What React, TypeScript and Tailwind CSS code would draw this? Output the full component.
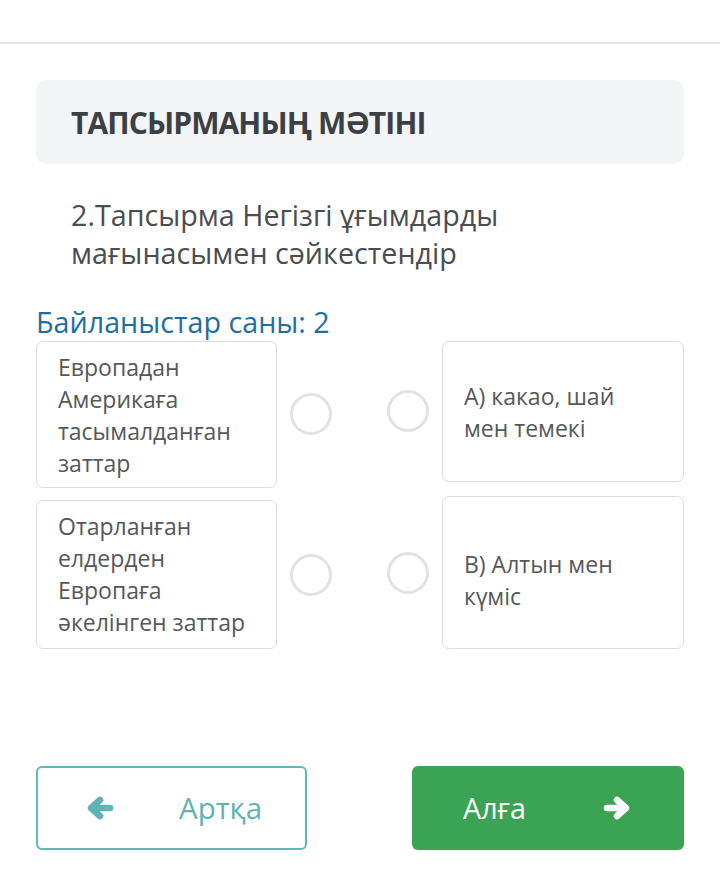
const pairs = [
  {
    left: "Европадан Америкаға тасымалданған заттар",
    right: "А) какао, шай мен темекі",
    pad: "pb-[8px]",
  },
  {
    left: "Отарланған елдерден Европаға әкелінген заттар",
    right: "В) Алтын мен күміс",
    pad: "pb-[10px]",
  },
];

function Circle({ className = "" }: { className?: string }) {
  return (
    <div
      className={`h-[42px] w-[42px] rounded-full border-[3px] border-[#dfe3e7] bg-white ${className}`}
    />
  );
}

// thick, round-capped arrow like the old font-awesome glyph
function Arrow({ flip = false, className = "" }: { flip?: boolean; className?: string }) {
  return (
    <svg
      viewBox="0 0 28 24"
      className={`h-[24px] w-[28px] ${flip ? "-scale-x-100" : ""} ${className}`}
      fill="none"
      stroke="currentColor"
      strokeWidth={6.5}
      strokeLinecap="round"
      strokeLinejoin="round"
    >
      <path d="M6 12H24" />
      <path d="M14 4L5 12L14 20" />
    </svg>
  );
}

export default function App() {
  return (
    <div
      className="min-h-[869px] bg-white text-[#4a4d50]"
      style={{ fontFamily: '"Open Sans", "Noto Sans", sans-serif' }}
    >
      <div className="h-[44px] border-b-2 border-[#e4e4e4]" />

      <div className="px-[36px] pt-[36px]">
        <div className="flex h-[84px] items-center rounded-[10px] bg-[#f3f4f6] px-[35px]">
          <h1 className="text-[30px] font-bold tracking-[-0.9px] text-[#3b4045]">
            ТАПСЫРМАНЫҢ МӘТІНІ
          </h1>
        </div>

        <p className="mt-[32px] pl-[35px] pr-[150px] text-[28.7px] leading-[38px] text-[#4a4d50]">
          2.Тапсырма Негізгі ұғымдарды мағынасымен сәйкестендір
        </p>

        <p className="mt-[31px] text-[28.7px] leading-[38px] text-[#1d6fa3]">
          Байланыстар саны: 2
        </p>

        <div className="flex text-[23px] leading-[32px] text-[#55585b]">
          <div className="flex w-[241px] flex-col gap-[12px]">
            {pairs.map((p) => (
              <div
                key={p.left}
                className={`rounded-[7px] border border-[#dcdcdc] pl-[21px] pr-[10px] pt-[9px] ${p.pad}`}
              >
                {p.left}
              </div>
            ))}
          </div>

          <div className="ml-[13px] flex flex-col">
            <Circle className="mt-[52px]" />
            <Circle className="mt-[119px]" />
          </div>

          <div className="ml-[55px] flex flex-col">
            <Circle className="mt-[49px]" />
            <Circle className="mt-[120px]" />
          </div>

          <div className="ml-[13px] flex w-[242px] flex-col gap-[14px]">
            <div className="flex h-[141px] flex-col justify-center rounded-[7px] border border-[#dcdcdc] pl-[21px] pr-[50px]">
              {pairs[0].right}
            </div>
            <div className="flex h-[153px] flex-col justify-center rounded-[7px] border border-[#dcdcdc] pl-[21px] pr-[50px] pt-[14px]">
              {pairs[1].right}
            </div>
          </div>
        </div>

        <div className="mt-[117px] flex justify-between">
          <button className="flex h-[84px] w-[271px] items-center rounded-[6px] border-2 border-[#62b7b7] pl-[48px] text-[29.5px] text-[#5fb3b3]">
            <Arrow />
            <span className="ml-[65px]">Артқа</span>
          </button>
          <button className="flex h-[84px] w-[272px] items-center rounded-[6px] bg-[#3ba354] pl-[51px] text-[28.7px] text-white">
            <span>Алға</span>
            <Arrow flip className="ml-[77px]" />
          </button>
        </div>
      </div>
    </div>
  );
}
